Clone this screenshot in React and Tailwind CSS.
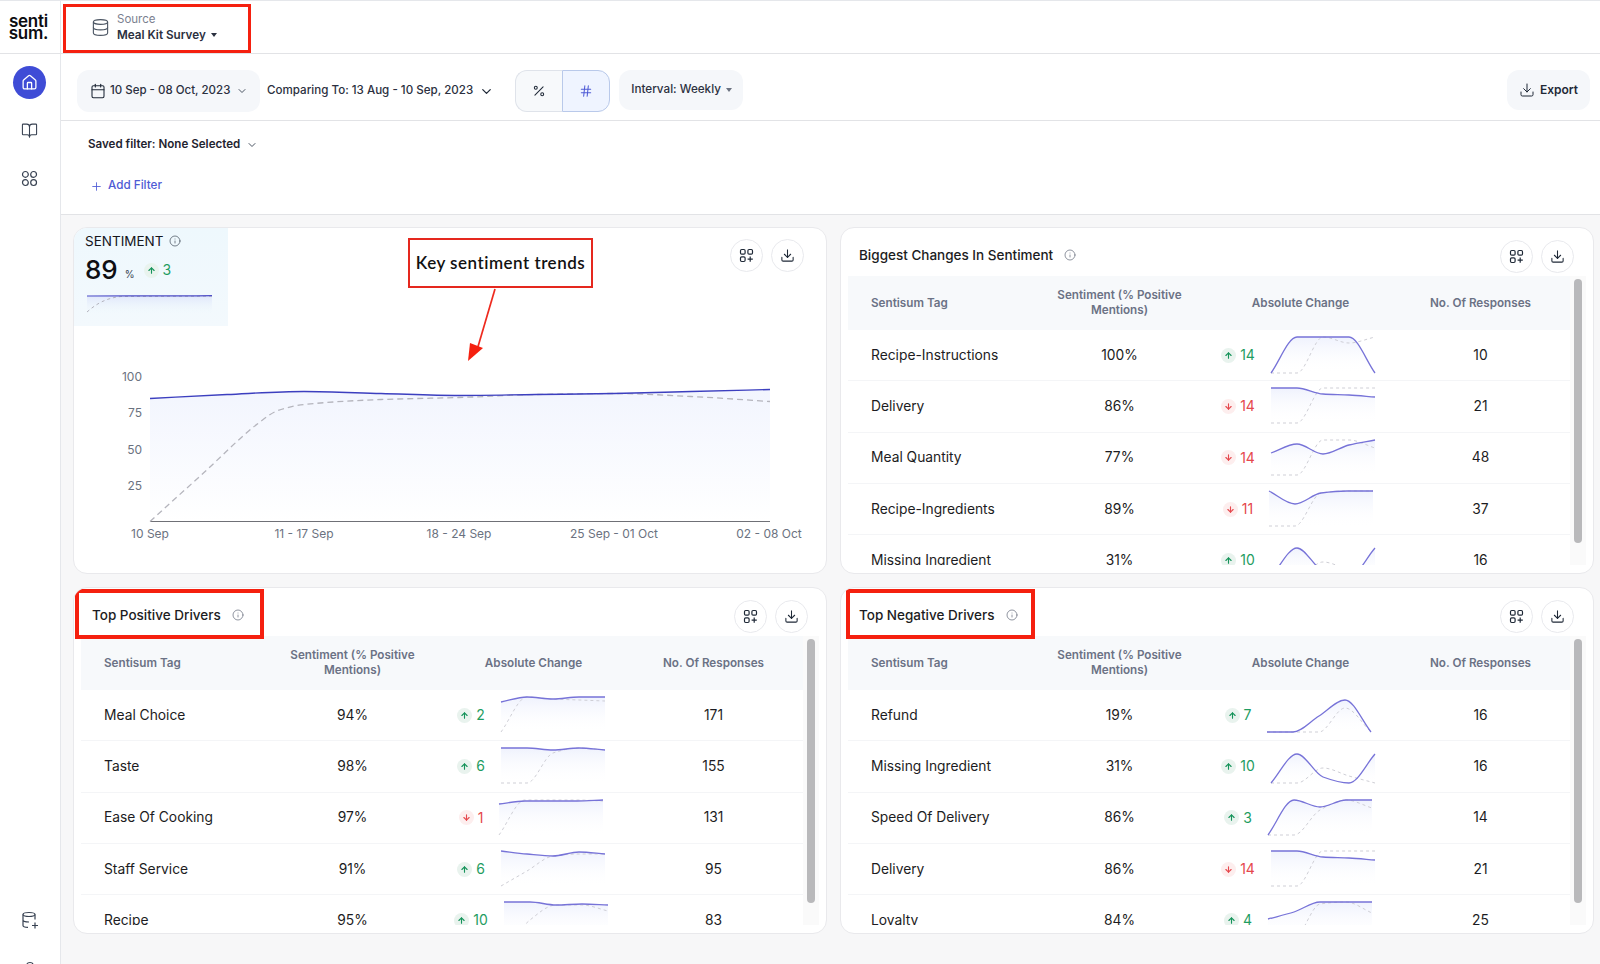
import React, { useId } from "react";
import { House, BookOpen, Database, Calendar, ChevronDown, Plus, Percent, Hash, Download, Info, ArrowUp, ArrowDown } from "lucide-react";

function smooth(pts) {
  const n = pts.length;
  const d = [];
  for (let i = 0; i < n - 1; i++) d.push((pts[i + 1][1] - pts[i][1]) / (pts[i + 1][0] - pts[i][0]));
  const m = pts.map((_, i) => {
    if (i === 0) return d[0];
    if (i === n - 1) return d[n - 2];
    if (d[i - 1] * d[i] <= 0) return 0;
    return (2 * d[i - 1] * d[i]) / (d[i - 1] + d[i]);
  });
  let p = `M${pts[0][0]} ${pts[0][1]}`;
  for (let i = 0; i < n - 1; i++) {
    const h = (pts[i + 1][0] - pts[i][0]) / 3;
    p += ` C${pts[i][0] + h} ${pts[i][1] + m[i] * h} ${pts[i + 1][0] - h} ${pts[i + 1][1] - m[i + 1] * h} ${pts[i + 1][0]} ${pts[i + 1][1]}`;
  }
  return p;
}

function Spark({ solid, dashed }) {
  const id = useId().replace(/[^a-zA-Z0-9]/g, "");
  const xs = [0, 26, 52, 78, 104];
  const s = smooth(solid.map((y, i) => [xs[i], y]));
  const da = smooth(dashed.map((y, i) => [xs[i], y]));
  return (
    <svg width="104" height="36" viewBox="0 0 104 36" className="block shrink-0 overflow-visible">
      <defs>
        <linearGradient id={id} x1="0" y1="0" x2="0" y2="1">
          <stop offset="0" stopColor="#eff2fd" />
          <stop offset="1" stopColor="#ffffff" stopOpacity="0" />
        </linearGradient>
      </defs>
      <path d={`${s} L104 36 L0 36 Z`} fill={`url(#${id})`} />
      <path d={da} fill="none" stroke="#cfcfd6" strokeWidth="1" strokeDasharray="3 3" />
      <path d={s} fill="none" stroke="#7773d8" strokeWidth="1.3" />
    </svg>
  );
}

const DELIVERY = { solid: [0, 0, 6, 7, 9], dashed: [35, 35, 0, 0, 0] };
const MISSING = { solid: [35, 6, 29, 35, 6], dashed: [35, 35, 20, 28, 35] };

const CHANGES = [
  ["Recipe-Instructions", "100%", "up", "14", [36, 0, 0, 0, 36], [36, 36, 0, 6, 0], "10"],
  ["Delivery", "86%", "down", "14", DELIVERY.solid, DELIVERY.dashed, "21"],
  ["Meal Quantity", "77%", "down", "14", [13, 4, 14, 5, 0], [35, 35, 0, 0, 8], "48"],
  ["Recipe-Ingredients", "89%", "down", "11", [0, 13, 2, 0, 0], [35, 35, 2, 0, 0], "37"],
  ["Missing Ingredient", "31%", "up", "10", MISSING.solid, MISSING.dashed, "16"],
];
const POSITIVE = [
  ["Meal Choice", "94%", "up", "2", [5, 0, 2, 0, 0], [35, 0, 2, 3, 4], "171"],
  ["Taste", "98%", "up", "6", [0, 0, 2, 0, 2], [35, 35, 5, 0, 2], "155"],
  ["Ease Of Cooking", "97%", "down", "1", [4, 1, 1, 1, 0], [35, 0, 0, 0, 1], "131"],
  ["Staff Service", "91%", "up", "6", [0, 3, 5, 1, 3], [35, 20, 5, 3, 3], "95"],
  ["Recipe", "95%", "up", "10", [0, 0, 3, 2, 3], [50, 18, 3, 3, 9], "83"],
];
const NEGATIVE = [
  ["Refund", "19%", "up", "7", [35, 35, 19, 3, 35], [35, 35, 35, 11, 35], "16"],
  ["Missing Ingredient", "31%", "up", "10", MISSING.solid, MISSING.dashed, "16"],
  ["Speed Of Delivery", "86%", "up", "3", [35, 0, 7, 0, 0], [35, 35, 10, 0, 8], "14"],
  ["Delivery", "86%", "down", "14", DELIVERY.solid, DELIVERY.dashed, "21"],
  ["Loyalty", "84%", "up", "4", [17, 10, 0, 0, 0], [36, 36, 2, 0, 11], "25"],
];

function Caret() {
  return (
    <svg width="6" height="4" viewBox="0 0 6 4" className="shrink-0">
      <path d="M0 0h6L3 4z" fill="currentColor" />
    </svg>
  );
}

function AddWidget() {
  return (
    <svg width="15" height="15" viewBox="0 0 15 15" fill="none" stroke="#1f2937" strokeWidth="1.2">
      <rect x="1.5" y="1.5" width="4.6" height="4.6" rx="1.2" />
      <rect x="8.9" y="1.5" width="4.6" height="4.6" rx="1.2" />
      <rect x="1.5" y="8.9" width="4.6" height="4.6" rx="1.2" />
      <path d="M11.2 8.6v5.2M8.6 11.2h5.2" />
    </svg>
  );
}

function IconButtons() {
  return (
    <div className="flex gap-[8px]">
      <button className="flex h-[33px] w-[33px] items-center justify-center rounded-full border border-[#e8e9ed] bg-white">
        <AddWidget />
      </button>
      <button className="flex h-[33px] w-[33px] items-center justify-center rounded-full border border-[#e8e9ed] bg-white">
        <Download size={15} color="#1f2937" strokeWidth={1.7} />
      </button>
    </div>
  );
}

function Change({ dir, value }) {
  const up = dir === "up";
  return (
    <>
      <span className={`flex h-[15px] w-[15px] shrink-0 items-center justify-center rounded-full ${up ? "bg-[#e9f3ee]" : "bg-[#fdeeee]"}`}>
        {up ? <ArrowUp size={9} strokeWidth={3} color="#15935a" /> : <ArrowDown size={9} strokeWidth={3} color="#e5484d" />}
      </span>
      <span className={`ml-[4px] -mt-[1px] text-[14px] ${up ? "text-[#1f9d61]" : "text-[#e5484d]"}`}>{value}</span>
    </>
  );
}

function TableCard({ title, rows, headerPad, box }) {
  return (
    <section className="relative flex h-[347px] flex-col overflow-hidden rounded-[14px] border border-[#e9e9ec] bg-white">
      <div className={`flex h-[48px] shrink-0 items-center justify-between pt-[9px] pl-[18px] ${headerPad}`}>
        <div className="flex items-center gap-[11px] pb-[3px]">
          <h2 className="text-[13.5px] font-[450] text-[#1c1c22]">{title}</h2>
          <Info size={12} color="#6b7280" strokeWidth={1.5} />
        </div>
        <IconButtons />
      </div>
      <div className="flex h-[289px] pl-[7px] pr-[7px]">
        <div className="flex-1 overflow-hidden">
          <div className="grid h-[54px] grid-cols-[181px_181px_181px_1fr] items-center bg-[#f7f9fb] text-[11.7px] font-semibold leading-[15px] text-[#6b7285]">
            <div className="pl-[23px]">Sentisum Tag</div>
            <div className="mx-auto max-w-[130px] text-center">Sentiment (% Positive Mentions)</div>
            <div className="text-center">Absolute Change</div>
            <div className="text-center">No. Of Responses</div>
          </div>
          {rows.map((r) => (
            <div key={r[0]} className="grid h-[51.3px] grid-cols-[181px_181px_181px_1fr] items-center border-b border-[#f4f5f7] text-[13.8px] text-[#1c1c22]">
              <div className="pl-[23px]">{r[0]}</div>
              <div className="text-center">{r[1]}</div>
              <div className="flex items-center justify-center pr-[5px]">
                <Change dir={r[2]} value={r[3]} />
                <span className="ml-[16px]">
                  <Spark solid={r[4]} dashed={r[5]} />
                </span>
              </div>
              <div className="text-center">{r[6]}</div>
            </div>
          ))}
        </div>
        <div className="w-[16px] shrink-0 bg-[#fafafa] px-[4px] pt-[3px]">
          <div className="h-[264px] w-[7.5px] rounded-full bg-[#b9b9bb]" />
        </div>
      </div>
      {box && <div className={`absolute top-[1px] h-[50px] w-[189px] border-[4px] border-[#f5200f] ${box}`} />}
    </section>
  );
}

function SentimentCard() {
  const blue = smooth([[151, 398], [228, 394], [305, 391], [382, 393], [460, 395], [537, 394], [615, 393], [692, 391], [771, 389]]);
  const dash = smooth([[151, 521], [205, 472], [259, 423], [279, 410], [305, 404], [382, 399], [460, 397], [537, 394], [615, 393], [692, 396], [771, 401]]);
  return (
    <section className="relative flex h-[347px] flex-col overflow-hidden rounded-[14px] border border-[#e9e9ec] bg-white">
      <div className="flex h-[99px] shrink-0 items-start justify-between">
        <div className="h-[98px] w-[154px] bg-gradient-to-b from-[#eef8fd] to-[#f3f9fd] pl-[11px] pt-[4px]">
          <div className="flex items-center gap-[6px] text-[13.5px] leading-[18px] text-[#16161c]">
            SENTIMENT
            <Info size={12} color="#4b5563" strokeWidth={1.5} />
          </div>
          <div className="mt-[5px] flex h-[30px] items-center">
            <span className="text-[26px] font-medium leading-[30px] text-[#0e0e12]">89</span>
            <span className="ml-[7px] mt-[9px] text-[10px] text-[#374151]">%</span>
            <span className="ml-[9px] flex items-center">
              <Change dir="up" value="3" />
            </span>
          </div>
          <svg width="128" height="22" viewBox="0 0 128 22" className="ml-[1px] mt-[7px] block">
            <defs>
              <linearGradient id="tilefill" x1="0" y1="0" x2="0" y2="1">
                <stop offset="0" stopColor="#dfe6fb" />
                <stop offset="1" stopColor="#eff8fc" stopOpacity="0" />
              </linearGradient>
            </defs>
            <path d="M1 4 L126 3.6 L126 22 L1 22 Z" fill="url(#tilefill)" />
            <path d="M1 20 C10 12 20 6 35 4.5 L126 4.2" fill="none" stroke="#b4b4be" strokeWidth="1" strokeDasharray="3 3" />
            <path d="M1 4 C40 3.6 90 4.2 126 3.6" fill="none" stroke="#4f4fc8" strokeWidth="1.2" />
          </svg>
        </div>
        <div className="mr-[22px] mt-[11px]">
          <IconButtons />
        </div>
      </div>
      <svg width="754" height="246" viewBox="75 326.5 754 246" className="block">
        <defs>
          <linearGradient id="chartfill" x1="0" y1="0" x2="0" y2="1">
            <stop offset="0" stopColor="#f2f5fe" />
            <stop offset="1" stopColor="#ffffff" />
          </linearGradient>
        </defs>
        <path d={`${blue} L771 521 L151 521 Z`} fill="url(#chartfill)" />
        <path d="M151 521 H771" stroke="#6f7076" strokeWidth="1" />
        <path d={dash} fill="none" stroke="#b5b5bd" strokeWidth="1.3" strokeDasharray="6 4" />
        <path d={blue} fill="none" stroke="#3c3fbf" strokeWidth="1.4" />
        <g fill="#6b7280" fontSize="12" textAnchor="end">
          <text x="143" y="380.5">100</text>
          <text x="143" y="416.5">75</text>
          <text x="143" y="453.5">50</text>
          <text x="143" y="489.5">25</text>
        </g>
        <g fill="#6b7280" fontSize="12" textAnchor="middle">
          <text x="151" y="537">10 Sep</text>
          <text x="305" y="537">11 - 17 Sep</text>
          <text x="460" y="537">18 - 24 Sep</text>
          <text x="615" y="537">25 Sep - 01 Oct</text>
          <text x="770" y="537">02 - 08 Oct</text>
        </g>
      </svg>
      <div className="absolute left-[334px] top-[10px] flex h-[50px] w-[185px] items-center justify-center border-[2.5px] border-[#e5281e] bg-white text-[17px] font-semibold tracking-[0.5px] text-[#111] [font-family:Lato,sans-serif]">
        Key sentiment trends
      </div>
      <svg width="60" height="80" viewBox="0 0 60 80" className="absolute left-[380px] top-[60px]">
        <path d="M41 1 L23 62" stroke="#ee2a1e" strokeWidth="1.7" />
        <path d="M14 73 L16 55 L29 60 Z" fill="#f5200f" />
      </svg>
    </section>
  );
}

export default function App() {
  return (
    <div className="flex h-[964px] w-[1600px] flex-col overflow-hidden border-t border-[#e5e7eb] bg-white text-[#1c1c22] [font-family:Inter,sans-serif]">
      <header className="flex h-[53px] shrink-0 items-stretch border-b border-[#e2e3e6]">
        <div className="flex w-[61px] shrink-0 flex-col items-center justify-center border-r border-[#e5e7eb] pr-[3px] text-[17px] font-semibold leading-[12px] tracking-[-0.2px] text-[#0c0c10]">
          <span>senti</span>
          <span>sum.</span>
        </div>
        <div className="ml-[2px] mt-[3px] flex h-[49px] w-[188px] items-center border-[3.5px] border-[#f5200f] pl-[25px] pb-[2px]">
          <Database size={19} color="#4b5563" strokeWidth={1.4} />
          <div className="ml-[7px]">
            <div className="text-[11.5px] leading-[15px] text-[#7b8190]">Source</div>
            <div className="flex items-center gap-[5px] text-[11.7px] font-semibold leading-[16px] text-[#2b3040]">
              Meal Kit Survey
              <Caret />
            </div>
          </div>
        </div>
      </header>
      <div className="flex min-h-0 flex-1">
        <aside className="flex w-[61px] shrink-0 flex-col items-center border-r border-[#e5e7eb] pr-[1px] pt-[12px]">
          <div className="flex h-[33px] w-[33px] items-center justify-center rounded-full bg-[#3f4cd6]">
            <House size={17} color="#fff" strokeWidth={1.8} />
          </div>
          <BookOpen size={17} color="#374151" strokeWidth={1.5} className="mt-[23px]" />
          <svg width="17" height="17" viewBox="0 0 17 17" fill="none" stroke="#374151" strokeWidth="1.2" className="mt-[31px]">
            <circle cx="4.4" cy="4.4" r="2.9" />
            <circle cx="12.6" cy="4.4" r="2.9" />
            <circle cx="4.4" cy="12.6" r="2.9" />
            <circle cx="12.6" cy="12.6" r="2.9" />
          </svg>
          <svg width="18" height="18" viewBox="0 0 18 18" fill="none" stroke="#374151" strokeWidth="1.2" className="mt-auto">
            <ellipse cx="8" cy="3.5" rx="6" ry="2" />
            <path d="M2 3.5v11c0 1 2 1.8 5 1.9M14 3.5v5M2 9c0 1 2.5 2 6 2" />
            <path d="M14 11.5v6M11 14.5h6" />
          </svg>
          <div className="mb-[-4px] mt-[33px] h-[6px] w-[8px] rounded-t-full border border-b-0 border-[#374151]" />
        </aside>
        <main className="flex min-w-0 flex-1 flex-col bg-[#f7f7f8]">
          <div className="flex h-[67px] shrink-0 items-start border-b border-[#e2e3e6] bg-white pl-[16px] pr-[10px] pt-[16px]">
            <div className="flex h-[42px] w-[183px] items-center rounded-xl bg-[#f5f7fa] pl-[13px] text-[11.5px] font-medium text-[#2b3040]">
              <Calendar size={16} color="#1f2937" strokeWidth={1.6} />
              <span className="ml-[4px]">10 Sep - 08 Oct, 2023</span>
              <ChevronDown size={12} className="ml-[6px]" color="#4b5563" />
            </div>
            <div className="ml-[7px] flex h-[42px] items-center text-[11.6px] font-medium text-[#2b3040]">
              Comparing To: 13 Aug - 10 Sep, 2023
              <ChevronDown size={15} className="ml-[6px]" color="#1f2937" />
            </div>
            <div className="ml-[21px] flex h-[42px] w-[95px]">
              <div className="flex w-[47px] items-center justify-center rounded-l-xl border border-r-0 border-[#dfe3ea] bg-[#f7f9fb]">
                <Percent size={14} color="#1f2937" strokeWidth={1.8} />
              </div>
              <div className="flex flex-1 items-center justify-center rounded-r-xl border border-[#b9c9ea] bg-[#eff4ff]">
                <Hash size={14} color="#4f5bd5" strokeWidth={1.8} />
              </div>
            </div>
            <div className="ml-[9px] flex h-[40px] w-[124px] items-center rounded-xl bg-[#f5f7fa] pl-[12px] text-[11.7px] font-medium text-[#2b3040]">
              Interval: Weekly
              <span className="ml-[5px] text-[#6b7280]">
                <Caret />
              </span>
            </div>
            <div className="ml-auto flex h-[40px] w-[83px] items-center justify-center gap-[5px] rounded-xl bg-[#f5f7fa] text-[12px] font-semibold text-[#1f2937]">
              <Download size={16} color="#1f2937" strokeWidth={1.5} />
              Export
            </div>
          </div>
          <div className="h-[94px] shrink-0 border-b border-[#e2e3e6] bg-white pl-[27px] pt-[15px]">
            <div className="flex h-[18px] items-center text-[11.6px] font-semibold text-[#1f2430]">
              Saved filter: None Selected
              <ChevronDown size={12} className="ml-[6px]" color="#4b5563" />
            </div>
            <div className="mt-[23px] flex h-[18px] items-center pl-[2px] text-[11.7px] font-medium text-[#4f5bd5]">
              <Plus size={13} color="#4f5bd5" strokeWidth={1.6} />
              <span className="ml-[5px]">Add Filter</span>
            </div>
          </div>
          <div className="grid grid-cols-[754px_754px] grid-rows-[347px_347px] gap-x-[13px] gap-y-[13px] pl-[12px] pt-[12px]">
            <SentimentCard />
            <TableCard title="Biggest Changes In Sentiment" rows={CHANGES} headerPad="pr-[19px]" />
            <TableCard title="Top Positive Drivers" rows={POSITIVE} headerPad="pr-[18px]" box="left-[1px]" />
            <TableCard title="Top Negative Drivers" rows={NEGATIVE} headerPad="pr-[19px]" box="left-[5px]" />
          </div>
        </main>
      </div>
    </div>
  );
}
